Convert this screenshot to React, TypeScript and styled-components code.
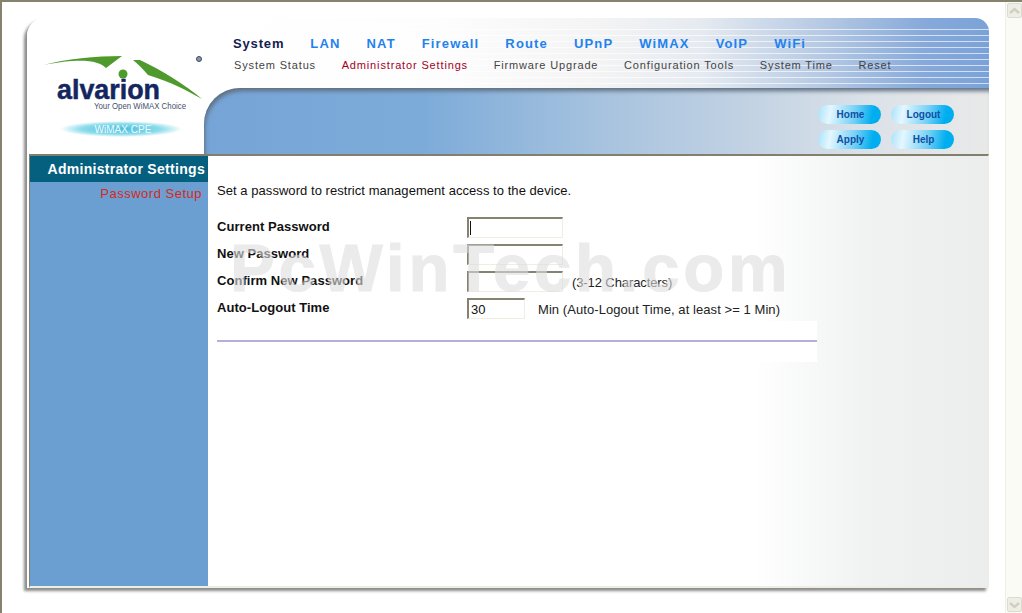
import React from "react";
import styled, { createGlobalStyle } from "styled-components";

const GlobalStyle = createGlobalStyle`
  html, body {
    margin: 0;
    height: 100%;
    overflow: hidden;
    background: #fff;
    font-family: "Liberation Sans", Arial, sans-serif;
  }
`;

const Window = styled.div`
  width: 1022px;
  height: 613px;
  box-sizing: border-box;
  display: flex;
  border-top: 2px solid #85826f;
  border-left: 2px solid #85826f;
  background: #fff;
`;

const Page = styled.div`
  flex: 1;
  padding: 16px 0 0 25px;
`;

const Scrollbar = styled.div`
  width: 17px;
  display: flex;
  flex-direction: column;
  justify-content: space-between;
  background: #fbfbf6;
  border-left: 1px solid #eeeee6;
  box-sizing: border-box;
`;

const ScrollButton = styled.div`
  width: 15px;
  height: 15px;
  margin: 1px 0 1px 1px;
  display: flex;
  align-items: center;
  justify-content: center;
  background: #eeeee4;
  border: 1px solid #dcdcd2;
  border-radius: 2px;
  box-sizing: border-box;
`;

const Frame = styled.div`
  width: 962px;
  height: 570px;
  display: flex;
  flex-direction: column;
  background: #fff;
  border-radius: 18px 14px 0 0;
  box-shadow: -3px 3px 3px #8b8b8b;
`;

const Header = styled.header`
  height: 136px;
  display: flex;
  flex-shrink: 0;
  background: #fff;
  border-radius: 18px 14px 0 0;
`;

const LogoCell = styled.div`
  width: 177px;
  flex-shrink: 0;
  padding: 34px 0 0 14px;
  box-sizing: border-box;
`;

const HeaderRight = styled.div`
  flex: 1;
  display: flex;
  flex-direction: column;
  background: #fff;
  border-radius: 0 14px 0 0;
`;

const NavBand = styled.div`
  position: relative;
  z-index: 1;
  height: 70px;
  flex-shrink: 0;
  padding: 18px 0 0 29px;
  box-sizing: border-box;
  border-radius: 0 14px 0 0;
  background:
    repeating-linear-gradient(180deg, transparent 0 5px, rgba(255, 255, 255, 0.65) 5px 6px) 0 6px no-repeat,
    linear-gradient(90deg, #fff 0%, #fdfdfd 30%, #f4f4f4 50%, #e6ebf1 63%, #b8cbe4 78%, #86a9da 92%, #7ba2d8 100%);
`;

const TopMenu = styled.nav`
  display: flex;
  gap: 26px;
  height: 15px;
  align-items: center;
`;

const TopItem = styled.span<{ $active?: boolean }>`
  font-size: 13px;
  font-weight: 700;
  letter-spacing: ${(p) => (p.$active ? "0.85px" : "1.15px")};
  color: ${(p) => (p.$active ? "#12204f" : "#1f82ee")};
`;

const SubMenu = styled.nav`
  display: flex;
  gap: 25.7px;
  margin: 7px 0 0 1px;
  height: 13px;
  align-items: center;
`;

const SubItem = styled.span<{ $active?: boolean }>`
  font-size: 11px;
  letter-spacing: 0.85px;
  white-space: nowrap;
  color: ${(p) => (p.$active ? "#a3001e" : "#444")};
`;

const CurveCell = styled.div`
  flex: 1;
  display: flex;
  justify-content: flex-end;
  padding: 17px 35px 0 0;
  box-sizing: border-box;
  border-radius: 36px 0 0 0;
  background: linear-gradient(90deg, #76a4d6 0%, #7dabd9 28%, #a9c4df 52%, #c0d1e3 68%, #dbe2e8 85%, #e9e9e9 100%);
  box-shadow: inset 2px 4px 4px -1px #5f6f80;
`;

const ButtonGrid = styled.div`
  display: grid;
  grid-template-columns: 63px 63px;
  grid-auto-rows: 19px;
  column-gap: 10px;
  row-gap: 6px;
`;

const HeadButton = styled.button`
  padding: 0 0 0 2px;
  border: none;
  border-radius: 10px;
  font-family: inherit;
  font-size: 10px;
  font-weight: 700;
  color: #0c4fa6;
  background: linear-gradient(100deg, #a8e2fa 0%, #e4f7fe 20%, #74d0f6 58%, #00aeef 85%);
`;

const Body = styled.div`
  flex: 1;
  display: flex;
  margin-left: 2px;
  border-top: 2px solid #827f6c;
  border-left: 1px solid #827f6c;
  border-bottom: 2px solid #eeeee2;
  border-right: 1px solid #eeeee2;
  min-height: 0;
`;

const Sidebar = styled.aside`
  width: 178px;
  flex-shrink: 0;
  background: #6b9fd1;
  text-align: right;
`;

const SideTitle = styled.div`
  height: 26px;
  line-height: 26px;
  padding-right: 3px;
  background: #05607f;
  color: #fff;
  font-size: 14px;
  font-weight: 700;
  letter-spacing: 0.3px;
`;

const SideLink = styled.a`
  display: block;
  margin-top: 4px;
  padding-right: 6px;
  color: #d8281a;
  font-size: 13px;
  letter-spacing: 0.5px;
`;

const Main = styled.main`
  position: relative;
  flex: 1;
  padding: 27px 0 0 9px;
  background: linear-gradient(90deg, #fff 0%, #fff 70%, #f1f2f2 84%, #ebeeed 100%);
`;

const Intro = styled.p`
  margin: 0 0 18px;
  height: 16px;
  font-size: 13px;
  line-height: 16px;
  color: #111;
  letter-spacing: 0.05px;
`;

const FormPanel = styled.div`
  width: 600px;
`;

const FormRow = styled.div`
  display: flex;
  height: 27px;
`;

const Label = styled.label`
  width: 250px;
  flex-shrink: 0;
  font-size: 13px;
  font-weight: 700;
  line-height: 20px;
  color: #111;
  letter-spacing: 0.05px;
`;

const Input = styled.input<{ $short?: boolean; $caret?: boolean }>`
  width: ${(p) => (p.$short ? "58px" : "96px")};
  height: 21px;
  padding: 0 0 0 2px;
  box-sizing: border-box;
  border: 1px solid;
  border-width: 2px 1px 1px 2px;
  border-color: #85826f #eeeee2 #eeeee2 #85826f;
  background: ${(p) =>
    p.$caret ? "linear-gradient(#111, #111) 1px 2px / 1px 14px no-repeat #fff" : "#fff"};
  font-family: inherit;
  font-size: 13px;
  color: #111;
  outline: none;
`;

const Hint = styled.span<{ $wide?: boolean }>`
  margin-left: ${(p) => (p.$wide ? "13px" : "9px")};
  padding-top: 4px;
  font-size: 13px;
  line-height: 16px;
  letter-spacing: ${(p) => (p.$wide ? "0.07px" : "-0.1px")};
  color: #222;
  white-space: nowrap;
`;

const RuleBlock = styled.div`
  height: 41px;
  margin-top: -4px;
  padding-top: 19px;
  box-sizing: border-box;
  background: #fff;
`;

const Rule = styled.div`
  height: 2px;
  background: #b6b0d9;
`;

const Watermark = styled.div`
  position: absolute;
  left: 22px;
  top: 74px;
  font-size: 67px;
  line-height: 76px;
  font-weight: 700;
  letter-spacing: 3.8px;
  white-space: nowrap;
  color: #dedede;
  -webkit-text-stroke: 1px #dedede;
  opacity: 0.6;
  pointer-events: none;
`;

const Logo = () => (
  <svg width="164" height="92" viewBox="0 0 164 92">
    <defs>
      <radialGradient id="pill">
        <stop offset="0%" stopColor="#46bedb" />
        <stop offset="65%" stopColor="#8ddcec" />
        <stop offset="100%" stopColor="#ffffff" />
      </radialGradient>
    </defs>
    <path d="M2 13 C25 7 55 4 81 4 L65 16 C58 8 38 6 2 13Z" fill="#4e9a2c" />
    <path d="M92 8 L99 8 C120 18 145 33 161 47 C145 38 130 30 107 23 C102 17 97 12 92 8Z" fill="#4e9a2c" />
    <circle cx="82" cy="22" r="4.5" fill="#4e9a2c" />
    <circle cx="158" cy="7" r="2.5" fill="#8a97a8" stroke="#3a4a60" strokeWidth="1" />
    <text x="16" y="47" fontSize="27" fontWeight="700" fill="#13265f" stroke="#13265f" strokeWidth="0.5" textLength="103" lengthAdjust="spacingAndGlyphs">alvarion</text>
    <text x="53" y="57" fontSize="8.5" fill="#44506a" textLength="92" lengthAdjust="spacingAndGlyphs">Your Open WiMAX Choice</text>
    <ellipse cx="80" cy="77" rx="61" ry="8" fill="url(#pill)" />
    <text x="82" y="81" fontSize="11" fill="#eefbfe" textAnchor="middle" textLength="57" lengthAdjust="spacingAndGlyphs">WiMAX CPE</text>
  </svg>
);

const Chevron = ({ down }: { down?: boolean }) => (
  <svg width="11" height="8" viewBox="0 0 11 8">
    <path d={down ? "M1 2 L5.5 6 L10 2" : "M1 6 L5.5 2 L10 6"} fill="none" stroke="#cfcfc4" strokeWidth="2.4" />
  </svg>
);

const topItems = ["LAN", "NAT", "Firewall", "Route", "UPnP", "WiMAX", "VoIP", "WiFi"];
const subItems = ["System Status", "Administrator Settings", "Firmware Upgrade", "Configuration Tools", "System Time", "Reset"];

const App: React.FC = () => {
  return (
    <Window>
      <GlobalStyle />
      <Page>
        <Frame>
          <Header>
            <LogoCell>
              <Logo />
            </LogoCell>
            <HeaderRight>
              <NavBand>
                <TopMenu>
                  <TopItem $active>System</TopItem>
                  {topItems.map((item) => (
                    <TopItem key={item}>{item}</TopItem>
                  ))}
                </TopMenu>
                <SubMenu>
                  {subItems.map((item) => (
                    <SubItem key={item} $active={item === "Administrator Settings"}>
                      {item}
                    </SubItem>
                  ))}
                </SubMenu>
              </NavBand>
              <CurveCell>
                <ButtonGrid>
                  <HeadButton>Home</HeadButton>
                  <HeadButton>Logout</HeadButton>
                  <HeadButton>Apply</HeadButton>
                  <HeadButton>Help</HeadButton>
                </ButtonGrid>
              </CurveCell>
            </HeaderRight>
          </Header>
          <Body>
            <Sidebar>
              <SideTitle>Administrator Settings</SideTitle>
              <SideLink>Password Setup</SideLink>
            </Sidebar>
            <Main>
              <Intro>Set a password to restrict management access to the device.</Intro>
              <FormPanel>
                <FormRow>
                  <Label>Current Password</Label>
                  <Input type="password" $caret />
                </FormRow>
                <FormRow>
                  <Label>New Password</Label>
                  <Input type="password" />
                </FormRow>
                <FormRow>
                  <Label>Confirm New Password</Label>
                  <Input type="password" />
                  <Hint>(3-12 Characters)</Hint>
                </FormRow>
                <FormRow>
                  <Label>Auto-Logout Time</Label>
                  <Input $short defaultValue="30" />
                  <Hint $wide>Min (Auto-Logout Time, at least &gt;= 1 Min)</Hint>
                </FormRow>
                <RuleBlock>
                  <Rule />
                </RuleBlock>
              </FormPanel>
              <Watermark>PcWinTech.com</Watermark>
            </Main>
          </Body>
        </Frame>
      </Page>
      <Scrollbar>
        <ScrollButton>
          <Chevron />
        </ScrollButton>
        <ScrollButton>
          <Chevron down />
        </ScrollButton>
      </Scrollbar>
    </Window>
  );
};

export default App;
